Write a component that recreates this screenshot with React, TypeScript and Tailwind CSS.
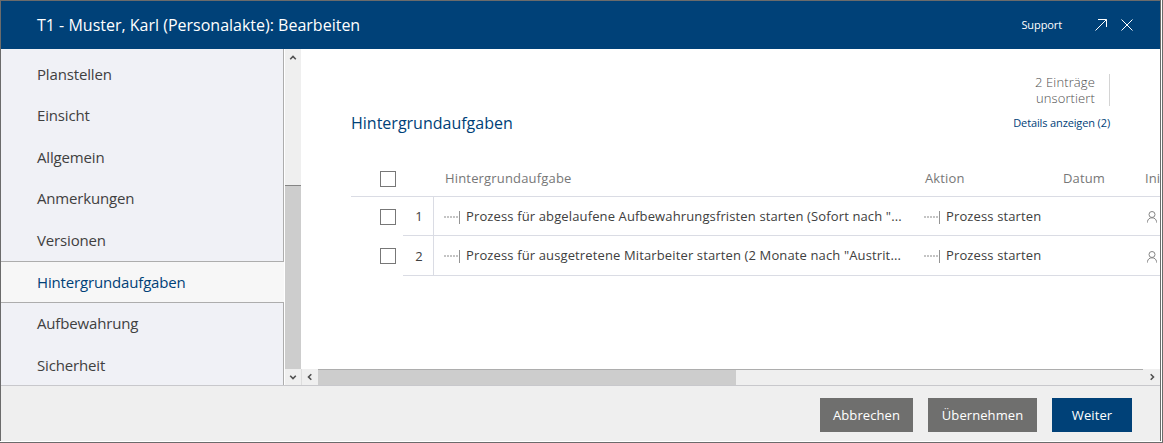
import React from "react";

const navItems = [
  "Planstellen",
  "Einsicht",
  "Allgemein",
  "Anmerkungen",
  "Versionen",
  "Hintergrundaufgaben",
  "Aufbewahrung",
  "Sicherheit",
];

const tasks = [
  {
    name: 'Prozess für abgelaufene Aufbewahrungsfristen starten (Sofort nach "...',
    action: "Prozess starten",
    height: "h-[39px]",
    numberPadding: "pt-px",
  },
  {
    name: 'Prozess für ausgetretene Mitarbeiter starten (2 Monate nach "Austrit...',
    action: "Prozess starten",
    height: "h-10",
    numberPadding: "pt-[3px]",
  },
];

const ProcessIcon: React.FC = () => (
  <svg width="16" height="13" className="mt-px mr-[6px] shrink-0" shapeRendering="crispEdges">
    <path d="M0 6H14" stroke="#c4c4c4" strokeWidth="2" strokeDasharray="2 1" />
    <path d="M15.5 0V13" stroke="#949494" />
  </svg>
);

const UserIcon: React.FC = () => (
  <svg width="10" height="12" viewBox="0 0 10 12" fill="none" stroke="#858585" className="mt-[2px] shrink-0">
    <circle cx="5" cy="3.5" r="3" />
    <path d="M0.5 11.5V10.5C0.8 8.2 2.6 6.8 5 6.8S9.2 8.2 9.5 10.5V11.5" />
  </svg>
);

interface ChevronProps {
  rotate: string;
}
const Chevron: React.FC<ChevronProps> = ({ rotate }) => (
  <svg width="8" height="8" viewBox="0 0 8 8" fill="none" stroke="#505050" strokeWidth="1.6" className={rotate}>
    <path d="M1.2 5.3L4 2.5L6.8 5.3" />
  </svg>
);

const Checkbox: React.FC = () => (
  <div className="h-4 w-4 border border-[#777777] bg-white" />
);

const Header: React.FC = () => (
  <header className="flex h-12 shrink-0 items-center bg-[#004178] pl-9 text-white">
    <h1 className="flex-1 text-[16px]">T1 - Muster, Karl (Personalakte): Bearbeiten</h1>
    <span className="text-[11px] tracking-[-0.1px]">Support</span>
    <svg width="12" height="12" fill="none" stroke="white" className="ml-[33px]">
      <path d="M0.5 11.5L11.5 0.5M3 0.5H11.5V8" />
    </svg>
    <svg width="12" height="12" fill="none" stroke="white" className="mr-[27px] ml-[14px]">
      <path d="M0.5 0.5L11.5 11.5M11.5 0.5L0.5 11.5" />
    </svg>
  </header>
);

const Sidebar: React.FC = () => (
  <nav className="flex w-[283px] shrink-0 flex-col bg-[#f0f1f6] text-[15px] tracking-[-0.16px] text-[#404040]">
    <div className="h-[4.5px] shrink-0 border-r border-[#adadad]" />
    {navItems.map((item) =>
      item === "Hintergrundaufgaben" ? (
        <div
          key={item}
          className="flex h-[42px] shrink-0 items-center border-y border-[#adadad] bg-[#f7f7f7] pl-9 text-[#004178]"
        >
          {item}
        </div>
      ) : (
        <div key={item} className="flex h-[41.5px] shrink-0 items-center border-r border-[#adadad] pb-px pl-9">
          {item}
        </div>
      )
    )}
  </nav>
);

const VerticalScrollbar: React.FC = () => (
  <div className="flex w-[17px] shrink-0 flex-col border-l border-white bg-[#efefef]">
    <div className="flex h-[17px] items-center justify-center">
      <Chevron rotate="" />
    </div>
    <div className="mt-[119px] flex-1 border-t border-[#858585] bg-[#cdcdcd]" />
    <div className="flex h-4 items-center justify-center">
      <Chevron rotate="rotate-180" />
    </div>
  </div>
);

const HorizontalScrollbar: React.FC = () => (
  <div className="flex h-4 shrink-0 border-l border-[#dddddd] bg-[#efefef]">
    <div className="flex w-4 items-center justify-center">
      <Chevron rotate="-rotate-90" />
    </div>
    <div className="w-[418px] border-t border-[#adadad] bg-[#cdcdcd]" />
    <div className="flex-1 border-t border-[#adadad]" />
    <div className="flex w-[17px] items-center justify-center">
      <Chevron rotate="rotate-90" />
    </div>
  </div>
);

const TaskTable: React.FC = () => (
  <div className="ml-[50px] w-[900px] text-[13px] tracking-[0.13px] text-[#404040]">
    <div className="flex h-9 items-center border-b border-[#dadce4] text-[#777777]">
      <div className="w-[94px] pl-[29px]">
        <Checkbox />
      </div>
      <div className="w-[480px] tracking-[0.17px]">Hintergrundaufgabe</div>
      <div className="w-[138px]">Aktion</div>
      <div className="w-[82px]">Datum</div>
      <div>Initiator</div>
    </div>
    {tasks.map((task, i) => (
      <div key={i} className={`flex ${task.height}`}>
        <div className="w-[52px] pt-3 pl-[29px]">
          <Checkbox />
        </div>
        <div className="flex flex-1 border-b border-[#dadce4]">
          <div
            className={`flex w-[31px] items-center justify-center border-r border-[#dadce4] pl-[2px] ${task.numberPadding}`}
          >
            {i + 1}
          </div>
          <div className="flex w-[480px] items-center pt-px pl-[10px] whitespace-nowrap">
            <ProcessIcon />
            {task.name}
          </div>
          <div className="flex w-[222px] items-center pt-px pl-[10px]">
            <ProcessIcon />
            {task.action}
          </div>
          <div className="flex items-center pl-[11px]">
            <UserIcon />
          </div>
        </div>
      </div>
    ))}
  </div>
);

const Footer: React.FC = () => (
  <footer className="flex h-14 shrink-0 items-center justify-end gap-[15px] border-t border-[#c8c8cc] bg-[#efefef] pt-[2px] pr-7 text-[13px] tracking-[0.08px] text-white">
    <button className="h-[34px] w-[93px] bg-[#6f6f6e] pt-[2px]">Abbrechen</button>
    <button className="h-[34px] w-[109px] bg-[#6f6f6e] pt-[2px]">Übernehmen</button>
    <button className="h-[34px] w-20 bg-[#004178] pt-[2px]">Weiter</button>
  </footer>
);

const App: React.FC = () => {
  return (
    <div className="h-[443px] w-[1163px] overflow-hidden border-r border-b border-[#6b6b6b] bg-white pr-px pb-px font-['Open_Sans',sans-serif]">
      <div className="flex h-[441px] w-[1161px] flex-col overflow-hidden border-t border-r border-l border-[#6b6b6b]">
        <Header />
        <div className="flex h-[336px] shrink-0">
          <Sidebar />
          <VerticalScrollbar />
          <main className="flex min-w-0 flex-1 flex-col overflow-hidden">
            <div className="flex-1">
              <div className="flex h-[112px] justify-between pl-[50px]">
                <h2 className="pt-[62px] text-[16px] text-[#004178]">Hintergrundaufgaben</h2>
                <div className="flex flex-col items-end pt-[25px] pr-[50px]">
                  <div className="h-8 border-r border-[#d4d4d4] pr-[14px] text-right text-[13px] leading-4 font-light tracking-[0.12px] text-[#505050]">
                    2 Einträge
                    <br />
                    unsortiert
                  </div>
                  <a className="mt-[9px] text-[11px] leading-4 tracking-[-0.13px] text-[#004178]">
                    Details anzeigen (2)
                  </a>
                </div>
              </div>
              <TaskTable />
            </div>
            <HorizontalScrollbar />
          </main>
        </div>
        <Footer />
      </div>
    </div>
  );
};

export default App;
